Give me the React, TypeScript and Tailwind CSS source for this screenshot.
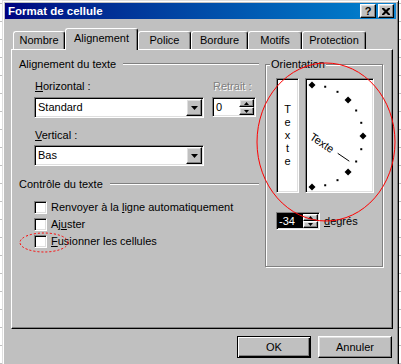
import React from 'react';

const raised =
    'border border-t-white border-l-white border-r-black border-b-black shadow-[inset_-1px_-1px_#808080,inset_1px_1px_#dfdfdf]';
const sunken =
    'border border-t-[#808080] border-l-[#808080] border-r-white border-b-white shadow-[inset_1px_1px_#000,inset_-1px_-1px_#dfdfdf]';

const Arrow = ({ up = false, small = false }: { up?: boolean; small?: boolean }) => {
    const w = small ? 5 : 7;
    const h = small ? 3 : 4;
    return (
        <svg width={w} height={h} viewBox={`0 0 ${w} ${h}`}>
            <polygon points={up ? `0,${h} ${w},${h} ${w / 2},0` : `0,0 ${w},0 ${w / 2},${h}`} fill="#000" />
        </svg>
    );
};

const GroupHeader = ({ label }: { label: string }) => (
    <div className="flex items-center h-[14px]">
        <span>{label}</span>
        <div className="flex-1 ml-[7px] h-[2px] border-t border-t-[#808080] border-b border-b-white" />
    </div>
);

const ComboBox = ({ value }: { value: string }) => (
    <div className={`${sunken} w-[170px] h-[21px] bg-white flex items-center p-[1px]`}>
        <span className="flex-1 pl-[2px]">{value}</span>
        <div className={`${raised} w-[16px] h-[17px] bg-[#c0c0c0] flex items-center justify-center`}>
            <Arrow />
        </div>
    </div>
);

const SpinButtons = ({ h }: { h: number }) => (
    <div className="flex flex-col w-[15px]">
        <div className={`${raised} bg-[#c0c0c0] flex items-center justify-center`} style={{ height: h }}>
            <Arrow up small />
        </div>
        <div className={`${raised} bg-[#c0c0c0] flex items-center justify-center`} style={{ height: h }}>
            <Arrow small />
        </div>
    </div>
);

const CheckRow = ({ children }: { children: React.ReactNode }) => (
    <div className="flex items-center h-[17px]">
        <div className={`${sunken} w-[13px] h-[13px] bg-white`} />
        <span className="ml-[4px]">{children}</span>
    </div>
);

const Tab = ({ label, width, active = false }: { label: string; width: number; active?: boolean }) => (
    <div
        className={`border-t border-l border-t-white border-l-white border-r border-r-black rounded-t-[3px] shadow-[inset_-1px_0_#808080] bg-[#c0c0c0] flex items-center justify-center ${
            active ? 'h-[22px] -mb-[1px] relative z-10 pb-[2px]' : 'h-[18px]'
        }`}
        style={{ width }}
    >
        {label}
    </div>
);

const Dial = () => {
    const cx = 5;
    const cy = 56;
    const r = 51;
    const marks = Array.from({ length: 13 }, (_, i) => {
        const a = ((90 - i * 15) * Math.PI) / 180;
        return { x: cx + r * Math.cos(a), y: cy - r * Math.sin(a), big: i % 3 === 0 };
    });
    return (
        <svg width={65} height={111} viewBox="0 0 65 111" className="block">
            {marks.map((m, i) =>
                m.big ? (
                    <polygon
                        key={i}
                        points={`${m.x},${m.y - 3.5} ${m.x + 3.5},${m.y} ${m.x},${m.y + 3.5} ${m.x - 3.5},${m.y}`}
                        fill="#000"
                    />
                ) : (
                    <rect key={i} x={m.x - 1} y={m.y - 1} width={2} height={2} fill="#000" />
                )
            )}
            <text
                x={4}
                y={cy}
                transform={`rotate(34 ${cx} ${cy})`}
                fontSize={11}
                fontFamily="'Liberation Sans', Arial, sans-serif"
                dominantBaseline="central"
                fill="#000"
            >
                Texte
            </text>
            <line x1={30.7} y1={73.3} x2={42.3} y2={81.2} stroke="#000" strokeWidth={1} />
        </svg>
    );
};

export default function App() {
    return (
        <div
            className="relative w-[401px] h-[364px] overflow-hidden bg-[repeating-linear-gradient(to_bottom,#fff_0,#fff_3px,#c0c0c0_3px,#c0c0c0_4px,#fff_4px,#fff_18px)] text-[11px] text-black leading-[13px]"
            style={{ fontFamily: "'Liberation Sans', Arial, sans-serif" }}
        >
            {/* dialog window */}
            <div className="ml-[2px] w-[397px] h-[380px] bg-[#c0c0c0] border border-t-[#dfdfdf] border-l-[#dfdfdf] border-r-black border-b-black shadow-[inset_1px_1px_#fff,inset_-1px_-1px_#808080] p-[2px] flex flex-col">
                {/* title bar */}
                <div className="h-[16px] bg-gradient-to-r from-[#000080] to-[#1084d0] flex items-center justify-between">
                    <span className="pl-[3px] text-white font-bold text-[11.5px]">Format de cellule</span>
                    <div className="flex gap-[2px] mr-[2px]">
                        <div className={`${raised} w-[16px] h-[14px] bg-[#c0c0c0] flex items-center justify-center font-bold text-[11px] leading-none`}>
                            ?
                        </div>
                        <div className={`${raised} w-[16px] h-[14px] bg-[#c0c0c0] flex items-center justify-center`}>
                            <svg width="8" height="7" viewBox="0 0 8 7">
                                <path d="M0 0h2l2 2 2-2h2v1L5.5 3.5 8 6v1H6L4 5 2 7H0V6l2.5-2.5L0 1z" fill="#000" />
                            </svg>
                        </div>
                    </div>
                </div>

                {/* tabs */}
                <div className="h-[30px] flex items-end pl-[8px]">
                    <Tab label="Nombre" width={52} />
                    <Tab label="Alignement" width={73} active />
                    <Tab label="Police" width={53} />
                    <Tab label="Bordure" width={57} />
                    <Tab label="Motifs" width={54} />
                    <Tab label="Protection" width={64} />
                </div>

                {/* tab panel */}
                <div className="ml-[6px] w-[382px] h-[280px] border border-t-white border-l-white border-r-black border-b-black shadow-[inset_-1px_-1px_#808080] flex pl-[7px] pt-[7px]">
                    {/* left column */}
                    <div className="w-[240px] flex flex-col">
                        <GroupHeader label="Alignement du texte" />
                        <div className="ml-[15px] flex flex-col">
                            <div className="flex gap-[8px] mt-[9px]">
                                <div className="w-[170px] flex flex-col">
                                    <span className="pl-[1px]">
                                        <u>H</u>orizontal :
                                    </span>
                                    <div className="mt-[4px]">
                                        <ComboBox value="Standard" />
                                    </div>
                                </div>
                                <div className="w-[44px] flex flex-col">
                                    <span className="pl-[1px] text-[#808080] [text-shadow:1px_1px_0_#fff]">Retrait :</span>
                                    <div className={`${sunken} mt-[4px] h-[20px] bg-white flex items-center p-[1px]`}>
                                        <span className="flex-1 pl-[2px]">0</span>
                                        <SpinButtons h={8} />
                                    </div>
                                </div>
                            </div>
                            <span className="mt-[11px] pl-[1px]">
                                <u>V</u>ertical :
                            </span>
                            <div className="mt-[3px]">
                                <ComboBox value="Bas" />
                            </div>
                        </div>
                        <div className="mt-[11px]">
                            <GroupHeader label="Contrôle du texte" />
                        </div>
                        <div className="ml-[15px] mt-[8px] flex flex-col">
                            <CheckRow>
                                Renvoyer à la <u>l</u>igne automatiquement
                            </CheckRow>
                            <CheckRow>
                                Aj<u>u</u>ster
                            </CheckRow>
                            <CheckRow>
                                <u>F</u>usionner les cellules
                            </CheckRow>
                        </div>
                    </div>

                    {/* orientation frame */}
                    <div className="ml-[6px] mt-[7px] relative w-[118px] h-[203px] border border-[#808080] shadow-[1px_1px_0_#fff,inset_1px_1px_0_#fff] pl-[10px] pt-[13px]">
                        <span className="absolute -top-[7px] left-[4px] px-[1px] bg-[#c0c0c0]">Orientation</span>
                        <div className="flex gap-[6px]">
                            <div className={`${sunken} w-[23px] h-[115px] bg-white flex flex-col items-center justify-center`}>
                                {['T', 'e', 'x', 't', 'e'].map((c, i) => (
                                    <span key={i} className="h-[13px] leading-[13px]">
                                        {c}
                                    </span>
                                ))}
                            </div>
                            <div className={`${sunken} w-[69px] h-[115px] bg-white p-[1px]`}>
                                <Dial />
                            </div>
                        </div>
                        <div className="mt-[19px] flex items-center">
                            <div className={`${sunken} w-[44px] h-[18px] bg-white flex p-[1px]`}>
                                <span className="flex-1 bg-black text-white pl-[1px] flex items-center">-34</span>
                                <SpinButtons h={7} />
                            </div>
                            <span className="ml-[4px]">
                                <u>d</u>egrés
                            </span>
                        </div>
                    </div>
                </div>

                {/* buttons */}
                <div className="mt-[7px] flex justify-end gap-[7px] pr-[4px]">
                    <button className="w-[74px] h-[22px] bg-[#c0c0c0] border border-black shadow-[inset_1px_1px_#fff,inset_-1px_-1px_#000,inset_-2px_-2px_#808080]">
                        OK
                    </button>
                    <button className={`${raised} w-[74px] h-[22px] bg-[#c0c0c0]`}>Annuler</button>
                </div>
            </div>

            {/* red annotations */}
            <svg className="absolute left-0 top-0 pointer-events-none" width={401} height={364}>
                <ellipse cx={326} cy={142} rx={69} ry={79} fill="none" stroke="#ff0000" strokeWidth={1} />
                <ellipse cx={44} cy={242.5} rx={24} ry={9.5} fill="none" stroke="#ff0000" strokeWidth={1} strokeDasharray="2 2" />
            </svg>
        </div>
    );
}
